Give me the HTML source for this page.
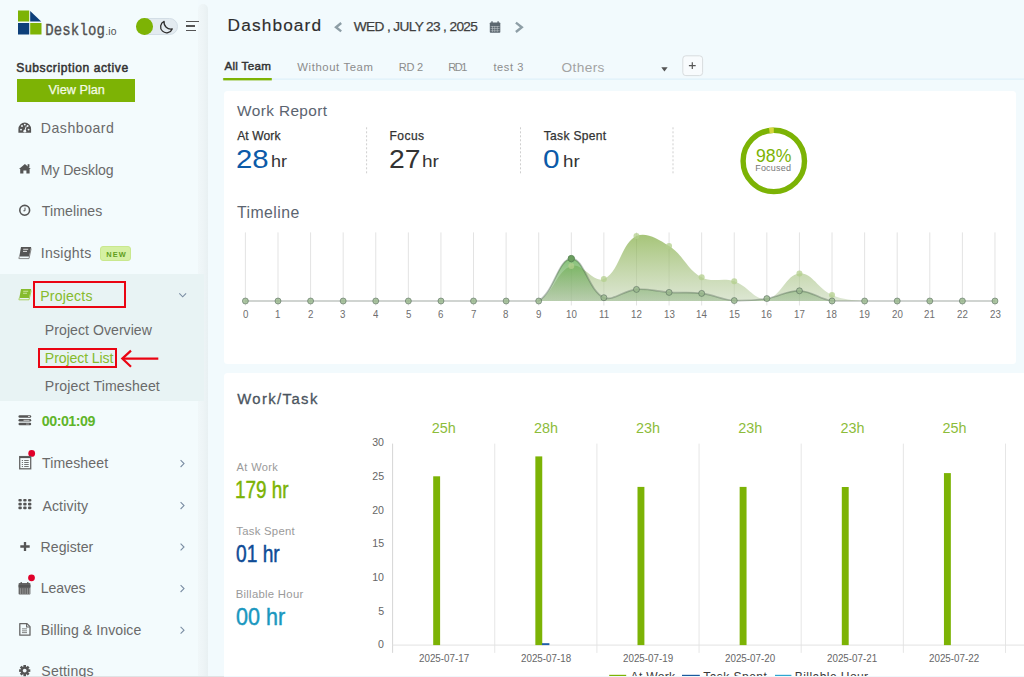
<!DOCTYPE html>
<html><head><meta charset="utf-8">
<style>
html,body{margin:0;padding:0;}
body{width:1024px;height:677px;overflow:hidden;position:relative;background:#f2fafd;font-family:"Liberation Sans",sans-serif;}
.a{position:absolute;}
.t{position:absolute;line-height:1;white-space:nowrap;}
svg{position:absolute;overflow:visible;}
</style></head><body>
<!-- sidebar -->
<div class="a" style="left:0;top:0;width:198px;height:677px;background:#f3fbfd;"></div>
<div class="a" style="left:198px;top:4px;width:10px;height:673px;background:linear-gradient(to right,#f0f7f9 0%,#edf4f6 55%,#e8f0f2 100%);border-radius:6px 6px 0 0;"></div>
<div class="a" style="left:0;top:274px;width:204px;height:127px;background:#e8f3f4;"></div>
<div class="a" style="left:0;top:676px;width:224px;height:1px;background:#dfe3e5;"></div>
<!-- logo -->
<svg style="left:0;top:0" width="120" height="45">
  <rect x="18" y="10.5" width="11.2" height="11" fill="#7db305"/>
  <polygon points="30.2,11 41.2,21.5 30.2,21.5" fill="#0d3f7a"/>
  <rect x="18" y="23" width="11.2" height="11.5" fill="#0d3f7a"/>
  <rect x="30.2" y="23" width="11.3" height="11.5" fill="#7db305"/>
</svg>
<div class="t" style="left:45.2px;top:22px;font-family:'Liberation Mono',monospace;font-size:14px;line-height:14px;letter-spacing:0.15px;color:#505050;-webkit-text-stroke:0.3px #505050;transform:scaleY(1.18);transform-origin:0 0;">Desklog</div>
<div class="t" style="left:105.2px;top:26.7px;font-size:10.4px;letter-spacing:0.2px;color:#505050;">.io</div>
<!-- toggle -->
<div class="a" style="left:137px;top:18px;width:40.5px;height:16.5px;box-sizing:border-box;border-radius:9px;background:#e3ebf0;border:1px solid #d3dee6;"></div>
<div class="a" style="left:136.2px;top:18.2px;width:16.6px;height:16.6px;border-radius:50%;background:#7db305;"></div>
<svg style="left:159px;top:18px" width="16" height="17" viewBox="0 0 16 17">
  <path d="M5.1 3.3 A6 6 0 1 0 13.2 10.9 A6.8 6.8 0 0 1 5.1 3.3 Z" fill="none" stroke="#2e2e2e" stroke-width="1.3" stroke-linejoin="round"/>
</svg>
<!-- hamburger -->
<div class="a" style="left:186px;top:20.6px;width:13px;height:1.6px;background:#555;"></div>
<div class="a" style="left:186px;top:25.2px;width:8.8px;height:1.6px;background:#555;"></div>
<div class="a" style="left:186px;top:29.8px;width:9.5px;height:1.6px;background:#555;"></div>
<!-- view plan -->
<div class="a" style="left:17.3px;top:79px;width:118px;height:22.8px;background:#7db305;"></div>
<!-- NEW badge -->
<div class="a" style="left:99.6px;top:245.8px;width:31px;height:15.4px;box-sizing:border-box;background:#d5f0a3;border:1px solid #c9e88e;border-radius:3px;"></div>
<div class="t" style="left:106.2px;top:250.6px;font-size:7.4px;font-weight:700;letter-spacing:1.15px;color:#5f9e1c;">NEW</div>
<!-- red boxes + arrow -->
<div class="a" style="left:32.7px;top:281.1px;width:89.3px;height:22.8px;border:2.3px solid #ea0412;"></div>
<div class="a" style="left:38.3px;top:348.4px;width:75px;height:15.7px;border:2.3px solid #ea0412;"></div>
<svg style="left:0;top:0" width="200" height="400">
  <path d="M158.3 358.6 H123" stroke="#ea0412" stroke-width="2.2" fill="none"/>
  <path d="M131 350.6 L122.3 358.6 L131 366.8" stroke="#ea0412" stroke-width="2.2" fill="none" stroke-linejoin="miter"/>
</svg>
<!-- chevrons & dots -->
<svg style="left:0;top:0" width="200" height="677">
  <path d="M179.3 293.4 L182.7 296.8 L186.1 293.4" stroke="#7a8da3" stroke-width="1.1" fill="none"/>
  <g stroke="#7a8da3" stroke-width="1.1" fill="none">
    <path d="M180.6 460.2 L184 463.6 L180.6 467"/>
    <path d="M180.6 502.2 L184 505.6 L180.6 509"/>
    <path d="M180.6 543.6 L184 547 L180.6 550.4"/>
    <path d="M180.6 585.2 L184 588.6 L180.6 592"/>
    <path d="M180.6 626.8 L184 630.2 L180.6 633.6"/>
  </g>
  <circle cx="31.7" cy="453.4" r="3.4" fill="#e0002a"/>
  <circle cx="31.5" cy="577.8" r="3.4" fill="#e0002a"/>
</svg>
<!-- nav icons -->
<svg style="left:0;top:0" width="40" height="677">
  <!-- dashboard gauge -->
  <path d="M18.4 132.8 V129.2 A6.35 6.6 0 0 1 31.1 129.2 V132.8 Z" fill="#555"/>
  <circle cx="21.0" cy="129.6" r="0.95" fill="#f3fafd"/><circle cx="22.0" cy="126.0" r="0.95" fill="#f3fafd"/>
  <circle cx="24.8" cy="124.6" r="0.95" fill="#f3fafd"/><circle cx="27.6" cy="126.0" r="0.95" fill="#f3fafd"/>
  <circle cx="28.6" cy="129.6" r="0.95" fill="#f3fafd"/>
  <path d="M24.8 131 L26.2 126.4" stroke="#f3fafd" stroke-width="1"/><circle cx="24.8" cy="131.2" r="1.4" fill="#f3fafd"/>
  <!-- home -->
  <path d="M19 169 L24.9 163.9 L30.8 169 L29.6 169 L29.6 173.6 L26.4 173.6 L26.4 170.5 L23.4 170.5 L23.4 173.6 L20.2 173.6 L20.2 169 Z" fill="#555"/>
  <rect x="27.6" y="164.2" width="1.8" height="3" fill="#555"/>
  <!-- clock -->
  <circle cx="24.7" cy="210.3" r="4.9" fill="none" stroke="#555" stroke-width="1.6"/>
  <path d="M25 207.6 V210.8 H23.4" stroke="#555" stroke-width="1" fill="none"/>
  <!-- book insights -->
  <path d="M21 247 H31.2 L29.2 256.5 H19.3 Z" fill="#555"/>
  <path d="M19.3 256.5 L18.9 258.6 H29 L31.2 248.5" stroke="#888" stroke-width="1" fill="none"/>
  <rect x="23.2" y="248.8" width="5" height="0.9" fill="#eee"/><rect x="23" y="250.9" width="4" height="0.9" fill="#eee"/>
  <!-- book projects (green) -->
  <path d="M21 289 H31.2 L29.2 298 H19.3 Z" fill="#86bb2e"/>
  <path d="M19.3 298 L18.9 299.8 H29 L31.2 290.5" stroke="#a8d060" stroke-width="1" fill="none"/>
  <rect x="23.2" y="290.8" width="5" height="0.9" fill="#cfe8a8"/><rect x="23" y="292.8" width="4" height="0.9" fill="#cfe8a8"/>
  <!-- timer list icon -->
  <rect x="18.5" y="415.2" width="12.7" height="2.5" rx="1.2" fill="#555"/>
  <rect x="18.5" y="419" width="12.7" height="2.5" rx="1.2" fill="#555"/>
  <rect x="18.5" y="422.8" width="12.7" height="2.5" rx="1.2" fill="#555"/>
  <rect x="28" y="416" width="2" height="0.9" fill="#ddd"/><rect x="23.5" y="419.8" width="6" height="0.9" fill="#ddd"/><rect x="26" y="423.6" width="3" height="0.9" fill="#aaa"/>
  <!-- timesheet -->
  <rect x="19.7" y="456.6" width="11" height="12.2" fill="none" stroke="#666" stroke-width="1.3"/>
  <rect x="19.7" y="456.6" width="11" height="1.5" fill="#555"/>
  <g fill="#666"><rect x="24.2" y="460" width="4.5" height="0.9"/><rect x="24.2" y="462" width="4.5" height="0.9"/><rect x="24.2" y="464" width="4.5" height="0.9"/><rect x="24.2" y="466" width="4.5" height="0.9"/>
  <rect x="21.8" y="460" width="1.2" height="0.9"/><rect x="21.8" y="462" width="1.2" height="0.9"/><rect x="21.8" y="464" width="1.2" height="0.9"/><rect x="21.8" y="466" width="1.2" height="0.9"/></g>
  <!-- activity grid -->
  <g fill="#555">
  <rect x="18.4" y="499" width="3.4" height="2.6" rx="1"/><rect x="23.2" y="499" width="3.4" height="2.6" rx="1"/><rect x="28" y="499" width="3.4" height="2.6" rx="1"/>
  <rect x="18.4" y="502.8" width="3.4" height="2.6" rx="1"/><rect x="23.2" y="502.8" width="3.4" height="2.6" rx="1"/><rect x="28" y="502.8" width="3.4" height="2.6" rx="1"/>
  <rect x="18.4" y="506.6" width="3.4" height="2.6" rx="1"/><rect x="23.2" y="506.6" width="3.4" height="2.6" rx="1"/><rect x="28" y="506.6" width="3.4" height="2.6" rx="1"/>
  </g>
  <!-- plus -->
  <path d="M25 542 V551 M20.3 546.5 H29.7" stroke="#555" stroke-width="2.3"/>
  <!-- calendar -->
  <rect x="18.6" y="583" width="11.8" height="11.5" rx="0.8" fill="#666"/>
  <rect x="18.6" y="584.8" width="11.8" height="2.6" fill="#555"/>
  <g fill="#aaa"><rect x="20.4" y="588.2" width="0.6" height="6"/><rect x="22.6" y="588.2" width="0.6" height="6"/><rect x="24.8" y="588.2" width="0.6" height="6"/><rect x="27" y="588.2" width="0.6" height="6"/><rect x="29.2" y="588.2" width="0.6" height="6"/></g>
  <rect x="20.6" y="582" width="1.2" height="2" fill="#555"/><rect x="27.2" y="582" width="1.2" height="2" fill="#555"/>
  <!-- document -->
  <path d="M19.8 623.6 H27 L30 626.6 V635.2 H19.8 Z" fill="none" stroke="#666" stroke-width="1.3" stroke-linejoin="round"/>
  <path d="M26.6 623.8 V627 H29.8" fill="none" stroke="#666" stroke-width="1.1"/>
  <rect x="22" y="628.4" width="5" height="0.9" fill="#777"/><rect x="22" y="630.4" width="5" height="0.9" fill="#777"/><rect x="22" y="632.2" width="5" height="0.9" fill="#777"/>
  <!-- gear -->
  <g transform="translate(24.7 670.6)">
    <circle r="4" fill="#555"/>
    <g fill="#555"><rect x="-1.3" y="-5.6" width="2.6" height="11.2"/><rect x="-1.3" y="-5.6" width="2.6" height="11.2" transform="rotate(45)"/><rect x="-1.3" y="-5.6" width="2.6" height="11.2" transform="rotate(90)"/><rect x="-1.3" y="-5.6" width="2.6" height="11.2" transform="rotate(135)"/></g>
    <circle r="1.9" fill="#f3fafd"/>
  </g>
</svg>

<!-- header icons -->
<svg style="left:0;top:0" width="1024" height="90">
  <path d="M341.2 23 L336 27.2 L341.2 31.4" stroke="#8e9ea6" stroke-width="2.4" fill="none"/>
  <path d="M515.9 22.6 L521.8 27.3 L515.9 32" stroke="#8e9ea6" stroke-width="2.4" fill="none"/>
  <rect x="489.8" y="22.5" width="10.5" height="10.3" rx="0.8" fill="#5c6770"/>
  <rect x="491.3" y="21.3" width="1.4" height="2" fill="#5c6770"/><rect x="497.4" y="21.3" width="1.4" height="2" fill="#5c6770"/>
  <g fill="#c6ccd0"><rect x="490.6" y="26" width="9" height="0.5"/><rect x="490.6" y="28.3" width="9" height="0.5"/><rect x="490.6" y="30.6" width="9" height="0.5"/>
  <rect x="492.3" y="26" width="0.5" height="6"/><rect x="494.6" y="26" width="0.5" height="6"/><rect x="496.9" y="26" width="0.5" height="6"/></g>
  <!-- tabs line -->
  <rect x="222" y="78.6" width="802" height="1" fill="#daeef9"/>
  <rect x="223.2" y="78" width="48.6" height="2.4" fill="#7db305"/>
  <!-- caret -->
  <path d="M661.3 67.3 H667.6 L664.45 71.4 Z" fill="#555"/>
  <!-- plus box -->
  <rect x="682.8" y="55.8" width="19.8" height="19.8" rx="3" fill="#f8fbfd" stroke="#d8dcde" stroke-width="1"/>
  <path d="M692.3 62.2 V69 M688.9 65.6 H695.7" stroke="#555" stroke-width="1.2"/>
</svg>

<!-- card 1 -->
<div class="a" style="left:224px;top:91.2px;width:792px;height:272.6px;background:#fff;border-radius:3.5px;"></div>
<svg style="left:0;top:0" width="1024" height="677">
  <g stroke="#cfcfcf" stroke-width="1" stroke-dasharray="2 2">
    <path d="M366.6 127.3 V173.8"/><path d="M520.5 127.3 V173.8"/><path d="M673 127.3 V173.8"/>
  </g>
  <!-- donut -->
  <circle cx="773.8" cy="160.9" r="30.7" fill="none" stroke="#7cb305" stroke-width="5.4"/>
  <path d="M769.3 130.5 A30.7 30.7 0 0 1 773.8 130.2" stroke="#d6d63c" stroke-width="5.4" fill="none"/>
</svg>
<svg style="left:0;top:0" width="1024" height="370">
<defs><linearGradient id="gl" x1="0" y1="234" x2="0" y2="301" gradientUnits="userSpaceOnUse"><stop offset="0" stop-color="#7fab3e" stop-opacity="0.7"/><stop offset="1" stop-color="#c6d6b6" stop-opacity="0.6"/></linearGradient><linearGradient id="gd" x1="0" y1="256" x2="0" y2="301" gradientUnits="userSpaceOnUse"><stop offset="0" stop-color="#4fa83a" stop-opacity="0.72"/><stop offset="1" stop-color="#78a26c" stop-opacity="0.36"/></linearGradient></defs>
<g stroke="#e3e3e3" stroke-width="1"><path d="M245.40 232.4 V305.5"/><path d="M277.99 232.4 V305.5"/><path d="M310.58 232.4 V305.5"/><path d="M343.17 232.4 V305.5"/><path d="M375.76 232.4 V305.5"/><path d="M408.35 232.4 V305.5"/><path d="M440.94 232.4 V305.5"/><path d="M473.53 232.4 V305.5"/><path d="M506.12 232.4 V305.5"/><path d="M538.71 232.4 V305.5"/><path d="M571.30 232.4 V305.5"/><path d="M603.89 232.4 V305.5"/><path d="M636.48 232.4 V305.5"/><path d="M669.07 232.4 V305.5"/><path d="M701.66 232.4 V305.5"/><path d="M734.25 232.4 V305.5"/><path d="M766.84 232.4 V305.5"/><path d="M799.43 232.4 V305.5"/><path d="M832.02 232.4 V305.5"/><path d="M864.61 232.4 V305.5"/><path d="M897.20 232.4 V305.5"/><path d="M929.79 232.4 V305.5"/><path d="M962.38 232.4 V305.5"/><path d="M994.97 232.4 V305.5"/></g>
<path d="M245.40 301.00 C258.44 301.00 264.95 301.00 277.99 301.00 C291.03 301.00 297.54 301.00 310.58 301.00 C323.62 301.00 330.13 301.00 343.17 301.00 C356.21 301.00 362.72 301.00 375.76 301.00 C388.80 301.00 395.31 301.00 408.35 301.00 C421.39 301.00 427.90 301.00 440.94 301.00 C453.98 301.00 460.49 301.00 473.53 301.00 C486.57 301.00 493.08 301.00 506.12 301.00 C519.16 301.00 528.14 301.00 538.71 301.00 C554.22 292.67 556.26 271.08 571.30 266.00 C582.33 262.28 593.62 283.73 603.89 279.00 C619.69 271.73 620.51 244.06 636.48 236.00 C646.58 232.00 657.84 238.99 669.07 246.10 C683.92 255.51 686.57 269.15 701.66 277.30 C712.64 283.23 722.01 277.22 734.25 281.30 C748.08 285.90 754.53 300.49 766.84 299.00 C780.60 297.33 786.01 274.22 799.43 273.40 C812.09 272.62 817.91 289.02 832.02 295.00 C843.98 300.06 851.47 299.79 864.61 301.00 C877.54 301.00 884.16 301.00 897.20 301.00 C910.24 301.00 916.75 301.00 929.79 301.00 C942.83 301.00 949.34 301.00 962.38 301.00 C975.42 301.00 981.93 301.00 994.97 301.00 L994.97 301.0 L245.40 301.0 Z" fill="url(#gl)"/>
<path d="M245.40 301.00 C258.44 301.00 264.95 301.00 277.99 301.00 C291.03 301.00 297.54 301.00 310.58 301.00 C323.62 301.00 330.13 301.00 343.17 301.00 C356.21 301.00 362.72 301.00 375.76 301.00 C388.80 301.00 395.31 301.00 408.35 301.00 C421.39 301.00 427.90 301.00 440.94 301.00 C453.98 301.00 460.49 301.00 473.53 301.00 C486.57 301.00 493.08 301.00 506.12 301.00 C519.16 301.00 528.84 301.00 538.71 301.00 C554.91 290.46 557.94 259.28 571.30 258.60 C584.01 257.96 588.19 290.28 603.89 297.70 C614.26 301.00 623.27 290.47 636.48 289.40 C649.34 288.35 656.01 291.60 669.07 292.40 C682.08 293.20 688.78 291.78 701.66 293.40 C714.85 295.06 721.07 299.55 734.25 300.60 C747.14 301.00 753.97 300.53 766.84 298.60 C780.05 296.61 786.52 290.32 799.43 290.80 C812.59 291.28 818.68 298.91 832.02 301.00 C844.75 301.00 851.57 301.00 864.61 301.00 C877.65 301.00 884.16 301.00 897.20 301.00 C910.24 301.00 916.75 301.00 929.79 301.00 C942.83 301.00 949.34 301.00 962.38 301.00 C975.42 301.00 981.93 301.00 994.97 301.00 L994.97 301.0 L245.40 301.0 Z" fill="url(#gd)"/>
<path d="M245.40 301.00 C258.44 301.00 264.95 301.00 277.99 301.00 C291.03 301.00 297.54 301.00 310.58 301.00 C323.62 301.00 330.13 301.00 343.17 301.00 C356.21 301.00 362.72 301.00 375.76 301.00 C388.80 301.00 395.31 301.00 408.35 301.00 C421.39 301.00 427.90 301.00 440.94 301.00 C453.98 301.00 460.49 301.00 473.53 301.00 C486.57 301.00 493.08 301.00 506.12 301.00 C519.16 301.00 528.84 301.00 538.71 301.00 C554.91 290.46 557.94 259.28 571.30 258.60 C584.01 257.96 588.19 290.28 603.89 297.70 C614.26 301.00 623.27 290.47 636.48 289.40 C649.34 288.35 656.01 291.60 669.07 292.40 C682.08 293.20 688.78 291.78 701.66 293.40 C714.85 295.06 721.07 299.55 734.25 300.60 C747.14 301.00 753.97 300.53 766.84 298.60 C780.05 296.61 786.52 290.32 799.43 290.80 C812.59 291.28 818.68 298.91 832.02 301.00 C844.75 301.00 851.57 301.00 864.61 301.00 C877.65 301.00 884.16 301.00 897.20 301.00 C910.24 301.00 916.75 301.00 929.79 301.00 C942.83 301.00 949.34 301.00 962.38 301.00 C975.42 301.00 981.93 301.00 994.97 301.00" fill="none" stroke="#3a4d40" stroke-opacity="0.32" stroke-width="1.7"/>
<circle cx="571.30" cy="266" r="3" fill="#b3cf8c" fill-opacity="0.75"/>
<circle cx="603.89" cy="279" r="3" fill="#b3cf8c" fill-opacity="0.75"/>
<circle cx="636.48" cy="236" r="3" fill="#b3cf8c" fill-opacity="0.75"/>
<circle cx="669.07" cy="246.1" r="3" fill="#b3cf8c" fill-opacity="0.75"/>
<circle cx="701.66" cy="277.3" r="3" fill="#b3cf8c" fill-opacity="0.75"/>
<circle cx="734.25" cy="281.3" r="3" fill="#b3cf8c" fill-opacity="0.75"/>
<circle cx="799.43" cy="273.4" r="3" fill="#b3cf8c" fill-opacity="0.75"/>
<circle cx="832.02" cy="295" r="3" fill="#b3cf8c" fill-opacity="0.75"/>
<circle cx="245.40" cy="301.0" r="3" fill="#98b88c" fill-opacity="0.8" stroke="#52665a" stroke-opacity="0.55" stroke-width="1"/>
<circle cx="277.99" cy="301.0" r="3" fill="#98b88c" fill-opacity="0.8" stroke="#52665a" stroke-opacity="0.55" stroke-width="1"/>
<circle cx="310.58" cy="301.0" r="3" fill="#98b88c" fill-opacity="0.8" stroke="#52665a" stroke-opacity="0.55" stroke-width="1"/>
<circle cx="343.17" cy="301.0" r="3" fill="#98b88c" fill-opacity="0.8" stroke="#52665a" stroke-opacity="0.55" stroke-width="1"/>
<circle cx="375.76" cy="301.0" r="3" fill="#98b88c" fill-opacity="0.8" stroke="#52665a" stroke-opacity="0.55" stroke-width="1"/>
<circle cx="408.35" cy="301.0" r="3" fill="#98b88c" fill-opacity="0.8" stroke="#52665a" stroke-opacity="0.55" stroke-width="1"/>
<circle cx="440.94" cy="301.0" r="3" fill="#98b88c" fill-opacity="0.8" stroke="#52665a" stroke-opacity="0.55" stroke-width="1"/>
<circle cx="473.53" cy="301.0" r="3" fill="#98b88c" fill-opacity="0.8" stroke="#52665a" stroke-opacity="0.55" stroke-width="1"/>
<circle cx="506.12" cy="301.0" r="3" fill="#98b88c" fill-opacity="0.8" stroke="#52665a" stroke-opacity="0.55" stroke-width="1"/>
<circle cx="538.71" cy="301.0" r="3" fill="#98b88c" fill-opacity="0.8" stroke="#52665a" stroke-opacity="0.55" stroke-width="1"/>
<circle cx="571.30" cy="258.6" r="3.2" fill="#6a9e5e" stroke="#5d8a58" stroke-width="1"/>
<circle cx="603.89" cy="297.7" r="3" fill="#98b88c" fill-opacity="0.8" stroke="#52665a" stroke-opacity="0.55" stroke-width="1"/>
<circle cx="636.48" cy="289.4" r="3" fill="#98b88c" fill-opacity="0.8" stroke="#52665a" stroke-opacity="0.55" stroke-width="1"/>
<circle cx="669.07" cy="292.4" r="3" fill="#98b88c" fill-opacity="0.8" stroke="#52665a" stroke-opacity="0.55" stroke-width="1"/>
<circle cx="701.66" cy="293.4" r="3" fill="#98b88c" fill-opacity="0.8" stroke="#52665a" stroke-opacity="0.55" stroke-width="1"/>
<circle cx="734.25" cy="300.6" r="3" fill="#98b88c" fill-opacity="0.8" stroke="#52665a" stroke-opacity="0.55" stroke-width="1"/>
<circle cx="766.84" cy="298.6" r="3" fill="#98b88c" fill-opacity="0.8" stroke="#52665a" stroke-opacity="0.55" stroke-width="1"/>
<circle cx="799.43" cy="290.8" r="3" fill="#98b88c" fill-opacity="0.8" stroke="#52665a" stroke-opacity="0.55" stroke-width="1"/>
<circle cx="832.02" cy="301.0" r="3" fill="#98b88c" fill-opacity="0.8" stroke="#52665a" stroke-opacity="0.55" stroke-width="1"/>
<circle cx="864.61" cy="301.0" r="3" fill="#98b88c" fill-opacity="0.8" stroke="#52665a" stroke-opacity="0.55" stroke-width="1"/>
<circle cx="897.20" cy="301.0" r="3" fill="#98b88c" fill-opacity="0.8" stroke="#52665a" stroke-opacity="0.55" stroke-width="1"/>
<circle cx="929.79" cy="301.0" r="3" fill="#98b88c" fill-opacity="0.8" stroke="#52665a" stroke-opacity="0.55" stroke-width="1"/>
<circle cx="962.38" cy="301.0" r="3" fill="#98b88c" fill-opacity="0.8" stroke="#52665a" stroke-opacity="0.55" stroke-width="1"/>
<circle cx="994.97" cy="301.0" r="3" fill="#98b88c" fill-opacity="0.8" stroke="#52665a" stroke-opacity="0.55" stroke-width="1"/>
</svg>
<!-- card 2 -->
<div class="a" style="left:223.8px;top:372.6px;width:810px;height:320px;background:#fff;border-radius:3.5px;"></div>
<svg style="left:0;top:0" width="1024" height="677">
<path d="M392.6 443.6 V652.9" stroke="#d6d6d6" stroke-width="1"/>
<path d="M494.75 443.6 V652.9" stroke="#e6e6e6" stroke-width="1"/>
<path d="M596.90 443.6 V652.9" stroke="#e6e6e6" stroke-width="1"/>
<path d="M699.05 443.6 V652.9" stroke="#e6e6e6" stroke-width="1"/>
<path d="M801.20 443.6 V652.9" stroke="#e6e6e6" stroke-width="1"/>
<path d="M903.35 443.6 V652.9" stroke="#e6e6e6" stroke-width="1"/>
<path d="M1005.50 443.6 V652.9" stroke="#e6e6e6" stroke-width="1"/>
<path d="M392.6 645.1 H1024" stroke="#e2e2e2" stroke-width="1"/>
<rect x="433.20" y="476.3" width="6.9" height="168.80" fill="#7cb305"/>
<rect x="535.35" y="456.4" width="6.9" height="188.70" fill="#7cb305"/>
<rect x="637.50" y="486.9" width="6.9" height="158.20" fill="#7cb305"/>
<rect x="739.65" y="486.9" width="6.9" height="158.20" fill="#7cb305"/>
<rect x="841.80" y="487" width="6.9" height="158.10" fill="#7cb305"/>
<rect x="943.95" y="473.1" width="6.9" height="172.00" fill="#7cb305"/>
<rect x="542" y="643.2" width="7.4" height="1.9" fill="#1f5ea8"/>
<rect x="609.2" y="674.8" width="17" height="10" fill="#7cb305"/>
<rect x="682" y="674.8" width="17.8" height="10" fill="#1a5a9e"/>
<rect x="775" y="674.8" width="16.4" height="10" fill="#2fa6d0"/>
</svg>
<div class="t" style="left:16.36px;top:62.09px;font-size:12.06px;letter-spacing:0.593px;color:#333;-webkit-text-stroke:0.5px #333;">Subscription active</div>
<div class="t" style="left:48.54px;top:83.90px;font-size:12.65px;letter-spacing:0.046px;color:#f4fbe6;-webkit-text-stroke:0.25px #f4fbe6;">View Plan</div>
<div class="t" style="left:40.77px;top:120.87px;font-size:14.10px;letter-spacing:0.525px;color:#6a6a6a;">Dashboard</div>
<div class="t" style="left:40.77px;top:162.87px;font-size:14.10px;letter-spacing:-0.080px;color:#6a6a6a;">My Desklog</div>
<div class="t" style="left:41.72px;top:204.17px;font-size:14.10px;letter-spacing:0.100px;color:#6a6a6a;">Timelines</div>
<div class="t" style="left:40.73px;top:246.27px;font-size:14.10px;letter-spacing:0.270px;color:#6a6a6a;">Insights</div>
<div class="t" style="left:40.27px;top:288.67px;font-size:14.10px;letter-spacing:0.189px;color:#86bb2e;">Projects</div>
<div class="t" style="left:44.87px;top:323.07px;font-size:14.10px;letter-spacing:0.036px;color:#6a6a6a;">Project Overview</div>
<div class="t" style="left:44.87px;top:351.37px;font-size:14.10px;letter-spacing:-0.102px;color:#86bb2e;">Project List</div>
<div class="t" style="left:44.87px;top:379.27px;font-size:14.10px;letter-spacing:0.132px;color:#6a6a6a;">Project Timesheet</div>
<div class="t" style="left:41.83px;top:413.84px;font-size:14.24px;letter-spacing:-0.501px;color:#5fb52a;font-weight:700;">00:01:09</div>
<div class="t" style="left:42.12px;top:455.97px;font-size:14.10px;letter-spacing:0.084px;color:#6a6a6a;">Timesheet</div>
<div class="t" style="left:42.40px;top:498.77px;font-size:14.10px;letter-spacing:0.140px;color:#6a6a6a;">Activity</div>
<div class="t" style="left:40.57px;top:539.77px;font-size:14.10px;letter-spacing:0.027px;color:#6a6a6a;">Register</div>
<div class="t" style="left:40.87px;top:581.47px;font-size:14.10px;letter-spacing:-0.149px;color:#6a6a6a;">Leaves</div>
<div class="t" style="left:40.87px;top:622.97px;font-size:14.10px;letter-spacing:0.058px;color:#6a6a6a;">Billing &amp; Invoice</div>
<div class="t" style="left:41.37px;top:664.27px;font-size:14.10px;letter-spacing:0.166px;color:#6a6a6a;">Settings</div>
<div class="t" style="left:227.62px;top:16.96px;font-size:17.30px;letter-spacing:1.116px;color:#2e2e2e;-webkit-text-stroke:0.15px #2e2e2e;">Dashboard</div>
<div class="t" style="left:353.83px;top:19.83px;font-size:13.66px;letter-spacing:-0.633px;color:#3f3f3f;-webkit-text-stroke:0.25px #3f3f3f;">WED , JULY 23 , 2025</div>
<div class="t" style="left:224.40px;top:60.26px;font-size:11.63px;letter-spacing:0.320px;color:#333;-webkit-text-stroke:0.45px #333;">All Team</div>
<div class="t" style="left:297.34px;top:61.90px;font-size:11.34px;letter-spacing:0.590px;color:#8c8c8c;">Without Team</div>
<div class="t" style="left:398.72px;top:62.25px;font-size:11.05px;letter-spacing:-0.232px;color:#8c8c8c;">RD 2</div>
<div class="t" style="left:448.22px;top:62.25px;font-size:11.05px;letter-spacing:-1.406px;color:#8c8c8c;">RD1</div>
<div class="t" style="left:493.43px;top:62.25px;font-size:11.05px;letter-spacing:0.580px;color:#8c8c8c;">test 3</div>
<div class="t" style="left:561.59px;top:60.63px;font-size:13.66px;letter-spacing:0.361px;color:#a3a3a3;">Others</div>
<div class="t" style="left:237.12px;top:103.26px;font-size:15.41px;letter-spacing:0.373px;color:#5b6470;">Work Report</div>
<div class="t" style="left:237.20px;top:130.19px;font-size:12.06px;letter-spacing:0.116px;color:#333;-webkit-text-stroke:0.25px #333;">At Work</div>
<div class="t" style="left:389.53px;top:130.19px;font-size:12.06px;letter-spacing:0.453px;color:#333;-webkit-text-stroke:0.25px #333;">Focus</div>
<div class="t" style="left:543.76px;top:130.19px;font-size:12.06px;letter-spacing:0.316px;color:#333;-webkit-text-stroke:0.25px #333;">Task Spent</div>
<div class="t" style="left:235.73px;top:145.58px;font-size:26.02px;letter-spacing:0.000px;color:#0c5aa8;transform:scaleX(1.1267);transform-origin:0 0;">28</div>
<div class="t" style="left:271.14px;top:154.07px;font-size:15.99px;letter-spacing:0.000px;color:#333;transform:scaleX(1.1258);transform-origin:0 0;">hr</div>
<div class="t" style="left:389.08px;top:145.58px;font-size:26.02px;letter-spacing:0.000px;color:#333;transform:scaleX(1.0884);transform-origin:0 0;">27</div>
<div class="t" style="left:422.47px;top:154.07px;font-size:15.99px;letter-spacing:0.000px;color:#333;transform:scaleX(1.1884);transform-origin:0 0;">hr</div>
<div class="t" style="left:543.21px;top:145.58px;font-size:26.02px;letter-spacing:0.000px;color:#0c5aa8;transform:scaleX(1.1451);transform-origin:0 0;">0</div>
<div class="t" style="left:562.99px;top:154.07px;font-size:15.99px;letter-spacing:0.000px;color:#333;transform:scaleX(1.1727);transform-origin:0 0;">hr</div>
<div class="t" style="left:755.81px;top:146.94px;font-size:18.02px;letter-spacing:0.000px;color:#7cb305;transform:scaleX(0.9796);transform-origin:0 0;">98%</div>
<div class="t" style="left:755.18px;top:163.87px;font-size:9.01px;letter-spacing:0.225px;color:#777;">Focused</div>
<div class="t" style="left:236.98px;top:204.99px;font-size:15.84px;letter-spacing:0.454px;color:#5b6470;">Timeline</div>
<div class="t" style="left:242.68px;top:309.46px;font-size:10.80px;letter-spacing:0.000px;color:#6e6e6e;transform:scaleX(0.9000);transform-origin:0 0;">0</div>
<div class="t" style="left:275.15px;top:309.46px;font-size:10.80px;letter-spacing:0.000px;color:#6e6e6e;transform:scaleX(0.9000);transform-origin:0 0;">1</div>
<div class="t" style="left:307.88px;top:309.46px;font-size:10.80px;letter-spacing:0.000px;color:#6e6e6e;transform:scaleX(0.9000);transform-origin:0 0;">2</div>
<div class="t" style="left:340.47px;top:309.46px;font-size:10.80px;letter-spacing:0.000px;color:#6e6e6e;transform:scaleX(0.9000);transform-origin:0 0;">3</div>
<div class="t" style="left:373.11px;top:309.46px;font-size:10.80px;letter-spacing:0.000px;color:#6e6e6e;transform:scaleX(0.9000);transform-origin:0 0;">4</div>
<div class="t" style="left:405.65px;top:309.46px;font-size:10.80px;letter-spacing:0.000px;color:#6e6e6e;transform:scaleX(0.9000);transform-origin:0 0;">5</div>
<div class="t" style="left:438.19px;top:309.46px;font-size:10.80px;letter-spacing:0.000px;color:#6e6e6e;transform:scaleX(0.9000);transform-origin:0 0;">6</div>
<div class="t" style="left:470.83px;top:309.46px;font-size:10.80px;letter-spacing:0.000px;color:#6e6e6e;transform:scaleX(0.9000);transform-origin:0 0;">7</div>
<div class="t" style="left:503.40px;top:309.46px;font-size:10.80px;letter-spacing:0.000px;color:#6e6e6e;transform:scaleX(0.9000);transform-origin:0 0;">8</div>
<div class="t" style="left:536.01px;top:309.46px;font-size:10.80px;letter-spacing:0.000px;color:#6e6e6e;transform:scaleX(0.9000);transform-origin:0 0;">9</div>
<div class="t" style="left:565.71px;top:309.46px;font-size:10.80px;letter-spacing:0.000px;color:#6e6e6e;transform:scaleX(0.9000);transform-origin:0 0;">10</div>
<div class="t" style="left:598.71px;top:309.46px;font-size:10.80px;letter-spacing:0.000px;color:#6e6e6e;transform:scaleX(0.9000);transform-origin:0 0;">11</div>
<div class="t" style="left:630.96px;top:309.46px;font-size:10.80px;letter-spacing:0.000px;color:#6e6e6e;transform:scaleX(0.9000);transform-origin:0 0;">12</div>
<div class="t" style="left:663.51px;top:309.46px;font-size:10.80px;letter-spacing:0.000px;color:#6e6e6e;transform:scaleX(0.9000);transform-origin:0 0;">13</div>
<div class="t" style="left:696.05px;top:309.46px;font-size:10.80px;letter-spacing:0.000px;color:#6e6e6e;transform:scaleX(0.9000);transform-origin:0 0;">14</div>
<div class="t" style="left:728.69px;top:309.46px;font-size:10.80px;letter-spacing:0.000px;color:#6e6e6e;transform:scaleX(0.9000);transform-origin:0 0;">15</div>
<div class="t" style="left:761.28px;top:309.46px;font-size:10.80px;letter-spacing:0.000px;color:#6e6e6e;transform:scaleX(0.9000);transform-origin:0 0;">16</div>
<div class="t" style="left:793.91px;top:309.46px;font-size:10.80px;letter-spacing:0.000px;color:#6e6e6e;transform:scaleX(0.9000);transform-origin:0 0;">17</div>
<div class="t" style="left:826.46px;top:309.46px;font-size:10.80px;letter-spacing:0.000px;color:#6e6e6e;transform:scaleX(0.9000);transform-origin:0 0;">18</div>
<div class="t" style="left:859.07px;top:309.46px;font-size:10.80px;letter-spacing:0.000px;color:#6e6e6e;transform:scaleX(0.9000);transform-origin:0 0;">19</div>
<div class="t" style="left:891.73px;top:309.46px;font-size:10.80px;letter-spacing:0.000px;color:#6e6e6e;transform:scaleX(0.9000);transform-origin:0 0;">20</div>
<div class="t" style="left:924.37px;top:309.46px;font-size:10.80px;letter-spacing:0.000px;color:#6e6e6e;transform:scaleX(0.9000);transform-origin:0 0;">21</div>
<div class="t" style="left:956.99px;top:309.46px;font-size:10.80px;letter-spacing:0.000px;color:#6e6e6e;transform:scaleX(0.9000);transform-origin:0 0;">22</div>
<div class="t" style="left:989.53px;top:309.46px;font-size:10.80px;letter-spacing:0.000px;color:#6e6e6e;transform:scaleX(0.9000);transform-origin:0 0;">23</div>
<div class="t" style="left:237.13px;top:391.65px;font-size:14.83px;letter-spacing:1.404px;color:#4a545e;-webkit-text-stroke:0.3px #4a545e;">Work/Task</div>
<div class="t" style="left:236.60px;top:462.15px;font-size:11.05px;letter-spacing:0.366px;color:#9a9a9a;">At Work</div>
<div class="t" style="left:235.18px;top:479.21px;font-size:23.26px;letter-spacing:0.000px;color:#7cb305;-webkit-text-stroke:0.45px #7cb305;transform:scaleX(0.8130);transform-origin:0 0;">179 hr</div>
<div class="t" style="left:236.37px;top:525.70px;font-size:11.34px;letter-spacing:0.247px;color:#9a9a9a;">Task Spent</div>
<div class="t" style="left:235.83px;top:543.14px;font-size:23.11px;letter-spacing:0.000px;color:#0f4c96;-webkit-text-stroke:0.45px #0f4c96;transform:scaleX(0.8303);transform-origin:0 0;">01 hr</div>
<div class="t" style="left:235.69px;top:588.50px;font-size:11.34px;letter-spacing:0.279px;color:#9a9a9a;">Billable Hour</div>
<div class="t" style="left:235.74px;top:605.64px;font-size:23.11px;letter-spacing:0.000px;color:#1a98bf;-webkit-text-stroke:0.45px #1a98bf;transform:scaleX(0.9336);transform-origin:0 0;">00 hr</div>
<div class="t" style="left:431.80px;top:420.52px;font-size:14.39px;letter-spacing:0.000px;color:#8cbc3a;">25h</div>
<div class="t" style="left:418.60px;top:652.55px;font-size:11.40px;letter-spacing:0.000px;color:#666;transform:scaleX(0.8600);transform-origin:0 0;">2025-07-17</div>
<div class="t" style="left:533.95px;top:420.52px;font-size:14.39px;letter-spacing:0.000px;color:#8cbc3a;">28h</div>
<div class="t" style="left:520.70px;top:652.55px;font-size:11.40px;letter-spacing:0.000px;color:#666;transform:scaleX(0.8600);transform-origin:0 0;">2025-07-18</div>
<div class="t" style="left:636.10px;top:420.52px;font-size:14.39px;letter-spacing:0.000px;color:#8cbc3a;">23h</div>
<div class="t" style="left:622.88px;top:652.55px;font-size:11.40px;letter-spacing:0.000px;color:#666;transform:scaleX(0.8600);transform-origin:0 0;">2025-07-19</div>
<div class="t" style="left:738.25px;top:420.52px;font-size:14.39px;letter-spacing:0.000px;color:#8cbc3a;">23h</div>
<div class="t" style="left:724.98px;top:652.55px;font-size:11.40px;letter-spacing:0.000px;color:#666;transform:scaleX(0.8600);transform-origin:0 0;">2025-07-20</div>
<div class="t" style="left:840.40px;top:420.52px;font-size:14.39px;letter-spacing:0.000px;color:#8cbc3a;">23h</div>
<div class="t" style="left:827.18px;top:652.55px;font-size:11.40px;letter-spacing:0.000px;color:#666;transform:scaleX(0.8600);transform-origin:0 0;">2025-07-21</div>
<div class="t" style="left:942.55px;top:420.52px;font-size:14.39px;letter-spacing:0.000px;color:#8cbc3a;">25h</div>
<div class="t" style="left:929.35px;top:652.55px;font-size:11.40px;letter-spacing:0.000px;color:#666;transform:scaleX(0.8600);transform-origin:0 0;">2025-07-22</div>
<div class="t" style="left:372.21px;top:437.28px;font-size:10.60px;letter-spacing:0.000px;color:#666;">30</div>
<div class="t" style="left:372.26px;top:470.94px;font-size:10.60px;letter-spacing:0.000px;color:#666;">25</div>
<div class="t" style="left:372.21px;top:504.61px;font-size:10.60px;letter-spacing:0.000px;color:#666;">20</div>
<div class="t" style="left:372.26px;top:538.27px;font-size:10.60px;letter-spacing:0.000px;color:#666;">15</div>
<div class="t" style="left:372.20px;top:571.94px;font-size:10.60px;letter-spacing:0.000px;color:#666;">10</div>
<div class="t" style="left:378.14px;top:605.60px;font-size:10.60px;letter-spacing:0.000px;color:#666;">5</div>
<div class="t" style="left:378.09px;top:639.27px;font-size:10.60px;letter-spacing:0.000px;color:#666;">0</div>
<div class="t" style="left:630.60px;top:671.19px;font-size:12.06px;letter-spacing:0.316px;color:#3a3a3a;">At Work</div>
<div class="t" style="left:703.16px;top:671.19px;font-size:12.06px;letter-spacing:0.449px;color:#3a3a3a;">Task Spent</div>
<div class="t" style="left:794.83px;top:671.19px;font-size:12.06px;letter-spacing:0.417px;color:#3a3a3a;">Billable Hour</div>
<div class="a" style="left:224px;top:676px;width:800px;height:1px;background:#f0f7fb;"></div>
</body></html>
